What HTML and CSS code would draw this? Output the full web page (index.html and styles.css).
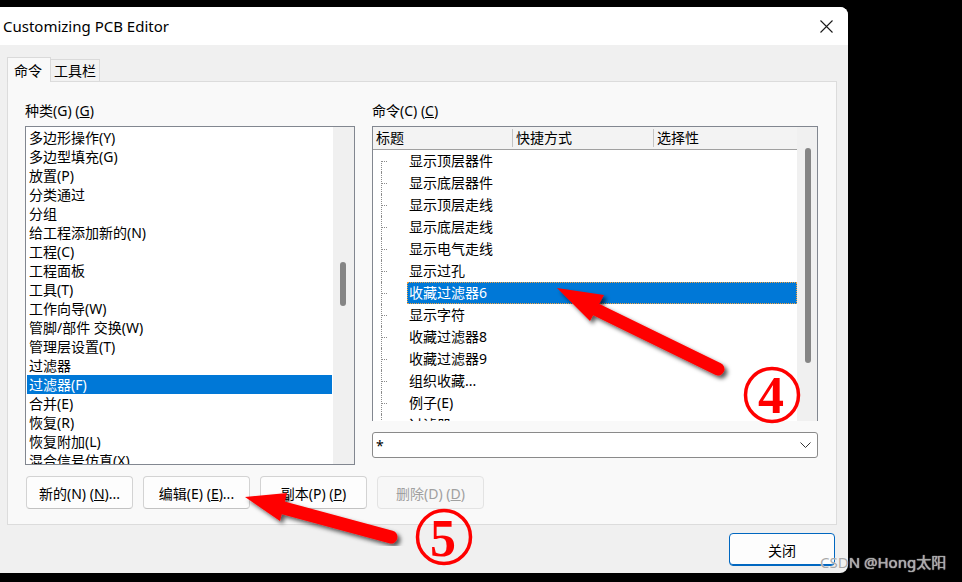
FILE: index.html
```html
<!DOCTYPE html>
<html lang="zh-CN">
<head>
    <meta charset="UTF-8" />
    <title>Customizing PCB Editor</title>
    <link rel="stylesheet" href="styles.css">
</head>
<body>
    <div class="screen">
        <div class="window">
            <div class="titlebar">
                <span class="title">Customizing PCB Editor</span>
                <svg class="close-x" width="13" height="13" viewBox="0 0 13 13">
                    <path d="M0.5 0.5 L12.5 12.5 M12.5 0.5 L0.5 12.5" stroke="#1a1a1a" stroke-width="1.1" fill="none" />
                </svg>
            </div>
            <div class="main">
                <div class="tabs">
                    <div class="tab active">命令</div>
                    <div class="tab">工具栏</div>
                </div>
                <div class="panel">
                    <div class="columns">
                        <div class="col-left">
                            <div class="label">种类(G) (<u>G</u>)</div>
                            <div class="listbox">
                                <ul class="items">
                                    <li>多边形操作(Y)</li>
                                    <li>多边型填充(G)</li>
                                    <li>放置(P)</li>
                                    <li>分类通过</li>
                                    <li>分组</li>
                                    <li>给工程添加新的(N)</li>
                                    <li>工程(C)</li>
                                    <li>工程面板</li>
                                    <li>工具(T)</li>
                                    <li>工作向导(W)</li>
                                    <li>管脚/部件 交换(W)</li>
                                    <li>管理层设置(T)</li>
                                    <li>过滤器</li>
                                    <li class="sel">过滤器(F)</li>
                                    <li>合并(E)</li>
                                    <li>恢复(R)</li>
                                    <li>恢复附加(L)</li>
                                    <li>混合信号仿真(X)</li>
                                </ul>
                                <div class="vscroll"><div class="thumb list-thumb"></div></div>
                            </div>
                        </div>
                        <div class="col-right">
                            <div class="label">命令(C) (<u>C</u>)</div>
                            <div class="treebox">
                                <div class="tree-main">
                                    <div class="tree-head">
                                        <div class="th th-title">标题</div>
                                        <div class="th th-key">快捷方式</div>
                                        <div class="th th-sel">选择性</div>
                                    </div>
                                    <div class="tree-rows">
                                        <div class="row"><i class="twig"></i><span>显示顶层器件</span></div>
                                        <div class="row"><i class="twig"></i><span>显示底层器件</span></div>
                                        <div class="row"><i class="twig"></i><span>显示顶层走线</span></div>
                                        <div class="row"><i class="twig"></i><span>显示底层走线</span></div>
                                        <div class="row"><i class="twig"></i><span>显示电气走线</span></div>
                                        <div class="row"><i class="twig"></i><span>显示过孔</span></div>
                                        <div class="row sel"><i class="twig"></i><span>收藏过滤器6</span></div>
                                        <div class="row"><i class="twig"></i><span>显示字符</span></div>
                                        <div class="row"><i class="twig"></i><span>收藏过滤器8</span></div>
                                        <div class="row"><i class="twig"></i><span>收藏过滤器9</span></div>
                                        <div class="row"><i class="twig"></i><span>组织收藏...</span></div>
                                        <div class="row"><i class="twig"></i><span>例子(E)</span></div>
                                        <div class="row"><i class="twig"></i><span>过滤器</span></div>
                                    </div>
                                </div>
                                <div class="vscroll tree-scroll"><div class="thumb tree-thumb"></div></div>
                            </div>
                            <div class="combo">
                                <span>*</span>
                                <svg width="11" height="6" viewBox="0 0 11 6">
                                    <path d="M0.5 0.5 L5.5 5.5 L10.5 0.5" stroke="#333" stroke-width="1" fill="none" />
                                </svg>
                            </div>
                        </div>
                    </div>
                    <div class="buttons">
                        <button class="btn">新的(N) (<u>N</u>)...</button>
                        <button class="btn">编辑(E) (<u>E</u>)...</button>
                        <button class="btn">副本(P) (<u>P</u>)</button>
                        <button class="btn" disabled>删除(D) (<u>D</u>)</button>
                    </div>
                </div>
                <div class="footer">
                    <button class="btn btn-close">关闭</button>
                </div>
            </div>
        </div>

        <svg class="marks" width="962" height="582" viewBox="0 0 962 582">
            <defs>
                <filter id="shadow" x="-20%" y="-20%" width="140%" height="140%">
                    <feDropShadow dx="3" dy="3" stdDeviation="2" flood-color="#000" flood-opacity="0.65" />
                </filter>
            </defs>
            <g filter="url(#shadow)">
                <line x1="593" y1="308" x2="718" y2="369" stroke="#ff0000" stroke-width="13" stroke-linecap="round" />
                <polygon points="557,288 604,295 590,321" fill="#ff0000" />
            </g>
            <g filter="url(#shadow)">
                <line x1="280" y1="507" x2="391" y2="537" stroke="#ff0000" stroke-width="13" stroke-linecap="round" />
                <polygon points="245,497 287,493 280,521" fill="#ff0000" />
            </g>
            <circle cx="772" cy="395" r="26.5" fill="none" stroke="#ff0000" stroke-width="3.5" />
            <text class="num" x="771" y="413">4</text>
            <circle cx="444" cy="537" r="26.5" fill="none" stroke="#ff0000" stroke-width="3.5" />
            <text class="num" x="443" y="556">5</text>
        </svg>
        <div class="watermark">CSDN @Hong太阳</div>
    </div>
</body>
</html>
```

FILE: styles.css
```css
body {
    margin: 0;
    background-color: #000;
    font-family: "Noto Sans", "Noto Sans CJK SC", sans-serif;
    font-size: 14px;
    color: #000;
}
.screen {
    position: relative;
    width: 962px;
    height: 582px;
    padding-top: 7px;
    box-sizing: border-box;
    overflow: hidden;
}
.window {
    width: 848px;
    height: 566px;
    background-color: #f0f0f0;
    border-radius: 0 8px 8px 0;
    overflow: hidden;
    display: flex;
    flex-direction: column;
}
.titlebar {
    height: 38px;
    flex: none;
    background-color: #fff;
    display: flex;
    align-items: center;
    justify-content: space-between;
    padding: 0 15px 0 3px;
}
.title {
    font-size: 15px;
}
.main {
    flex: 1;
    padding: 12px 11px 0 7px;
}
.tabs {
    display: flex;
    align-items: flex-end;
    height: 25px;
    margin-bottom: -1px;
    position: relative;
}
.tab {
    height: 22px;
    line-height: 22px;
    padding: 0 3px;
    margin-bottom: 1px;
    box-sizing: border-box;
    border: 1px solid #dadada;
    border-left: none;
    border-bottom: none;
    background-color: #f2f2f2;
}
.tab.active {
    height: 25px;
    line-height: 25px;
    margin-bottom: 0;
    padding: 0 8px 0 6px;
    border-left: 1px solid #dadada;
    background-color: #f9f9f9;
}
.panel {
    height: 444px;
    box-sizing: border-box;
    border: 1px solid #dcdcdc;
    background-color: #f9f9f9;
    padding: 19px 0 0 17px;
}
.columns {
    display: flex;
    align-items: flex-start;
    gap: 17px;
}
.col-left {
    width: 330px;
}
.col-right {
    width: 446px;
}
.label {
    line-height: 20px;
    margin-bottom: 5px;
}
.listbox {
    height: 339px;
    box-sizing: border-box;
    border: 1px solid #828790;
    background-color: #fff;
    display: flex;
}
.items {
    list-style: none;
    margin: 0;
    padding: 1px 0 0 1px;
    flex: 1;
    overflow: hidden;
}
.items li {
    height: 19px;
    line-height: 19px;
    padding-left: 2px;
    margin-right: 1px;
    white-space: nowrap;
}
.items li.sel {
    background-color: #0078d7;
    color: #fff;
}
.vscroll {
    width: 21px;
    flex: none;
    background-color: #f0f0f0;
}
.thumb {
    background-color: #858585;
    border-radius: 3px;
}
.list-thumb {
    margin: 135px 0 0 7px;
    width: 6px;
    height: 44px;
}
.treebox {
    height: 295px;
    box-sizing: border-box;
    border: 1px solid #828790;
    border-bottom: none;
    background-color: #fff;
    display: flex;
}
.tree-main {
    flex: 1;
    display: flex;
    flex-direction: column;
    overflow: hidden;
}
.tree-head {
    height: 23px;
    flex: none;
    display: flex;
    background-color: #f3f3f3;
    border-bottom: 1px solid #a0a0a0;
    box-sizing: border-box;
}
.th {
    line-height: 22px;
    padding-left: 3px;
    box-sizing: border-box;
}
.th-title, .th-key {
    border-right: 1px solid #c4c4c4;
    margin: 2px 0;
    line-height: 18px;
}
.th-title {
    width: 140px;
}
.th-key {
    width: 141px;
}
.th-sel {
    flex: 1;
}
.tree-rows {
    flex: 1;
    overflow: hidden;
}
.row {
    height: 22px;
    display: flex;
    align-items: flex-start;
}
.twig {
    width: 7px;
    height: 22px;
    margin-left: 8px;
    flex: none;
    box-sizing: border-box;
    border-left: 1px dotted #8c8c8c;
    background: linear-gradient(to right, #8c8c8c 50%, transparent 50%) 0 11px / 2px 1px repeat-x;
}
.row:first-child .twig {
    height: 11px;
    margin-top: 11px;
    background-position: 0 0;
}
.row span {
    flex: 1;
    height: 22px;
    line-height: 22px;
    margin-left: 19px;
    padding-left: 2px;
    box-sizing: border-box;
    white-space: nowrap;
}
.row.sel span {
    background-color: #0078d7;
    color: #fff;
    border: 1px dotted #f4a340;
    line-height: 20px;
    padding-left: 1px;
}
.tree-scroll {
    width: 20px;
}
.tree-thumb {
    margin: 21px 0 0 8px;
    width: 6px;
    height: 215px;
}
.combo {
    margin-top: 11px;
    height: 26px;
    box-sizing: border-box;
    border: 1px solid #8a8a8a;
    border-radius: 3px;
    background-color: #fff;
    display: flex;
    align-items: center;
    justify-content: space-between;
    padding: 0 6px 0 3px;
}
.buttons {
    display: flex;
    gap: 10px;
    margin: 11px 0 0 1px;
}
.btn {
    width: 107px;
    height: 33px;
    font-family: inherit;
    font-size: 14px;
    color: #000;
    background-color: #fdfdfd;
    border: 1px solid #d3d3d3;
    border-bottom-color: #c2c2c2;
    border-radius: 4px;
    padding: 0;
}
.btn:disabled {
    color: #a0a0a0;
    background-color: #f7f7f7;
    border-color: #e3e3e3;
}
.footer {
    display: flex;
    justify-content: flex-end;
    padding: 8px 2px 0 0;
}
.btn-close {
    width: 106px;
    border: 1px solid #0067c0;
    box-shadow: inset 0 -1px 0 #0067c0;
}
.marks {
    position: absolute;
    left: 0;
    top: 0;
    pointer-events: none;
}
.num {
    font-family: "Liberation Serif", serif;
    font-weight: bold;
    font-size: 52px;
    fill: #ff0000;
    text-anchor: middle;
}
.watermark {
    position: absolute;
    left: 820px;
    top: 551px;
    font-size: 15px;
    color: #a8a8a8;
    text-shadow: 0 0 1px #fff;
    white-space: nowrap;
}
```
